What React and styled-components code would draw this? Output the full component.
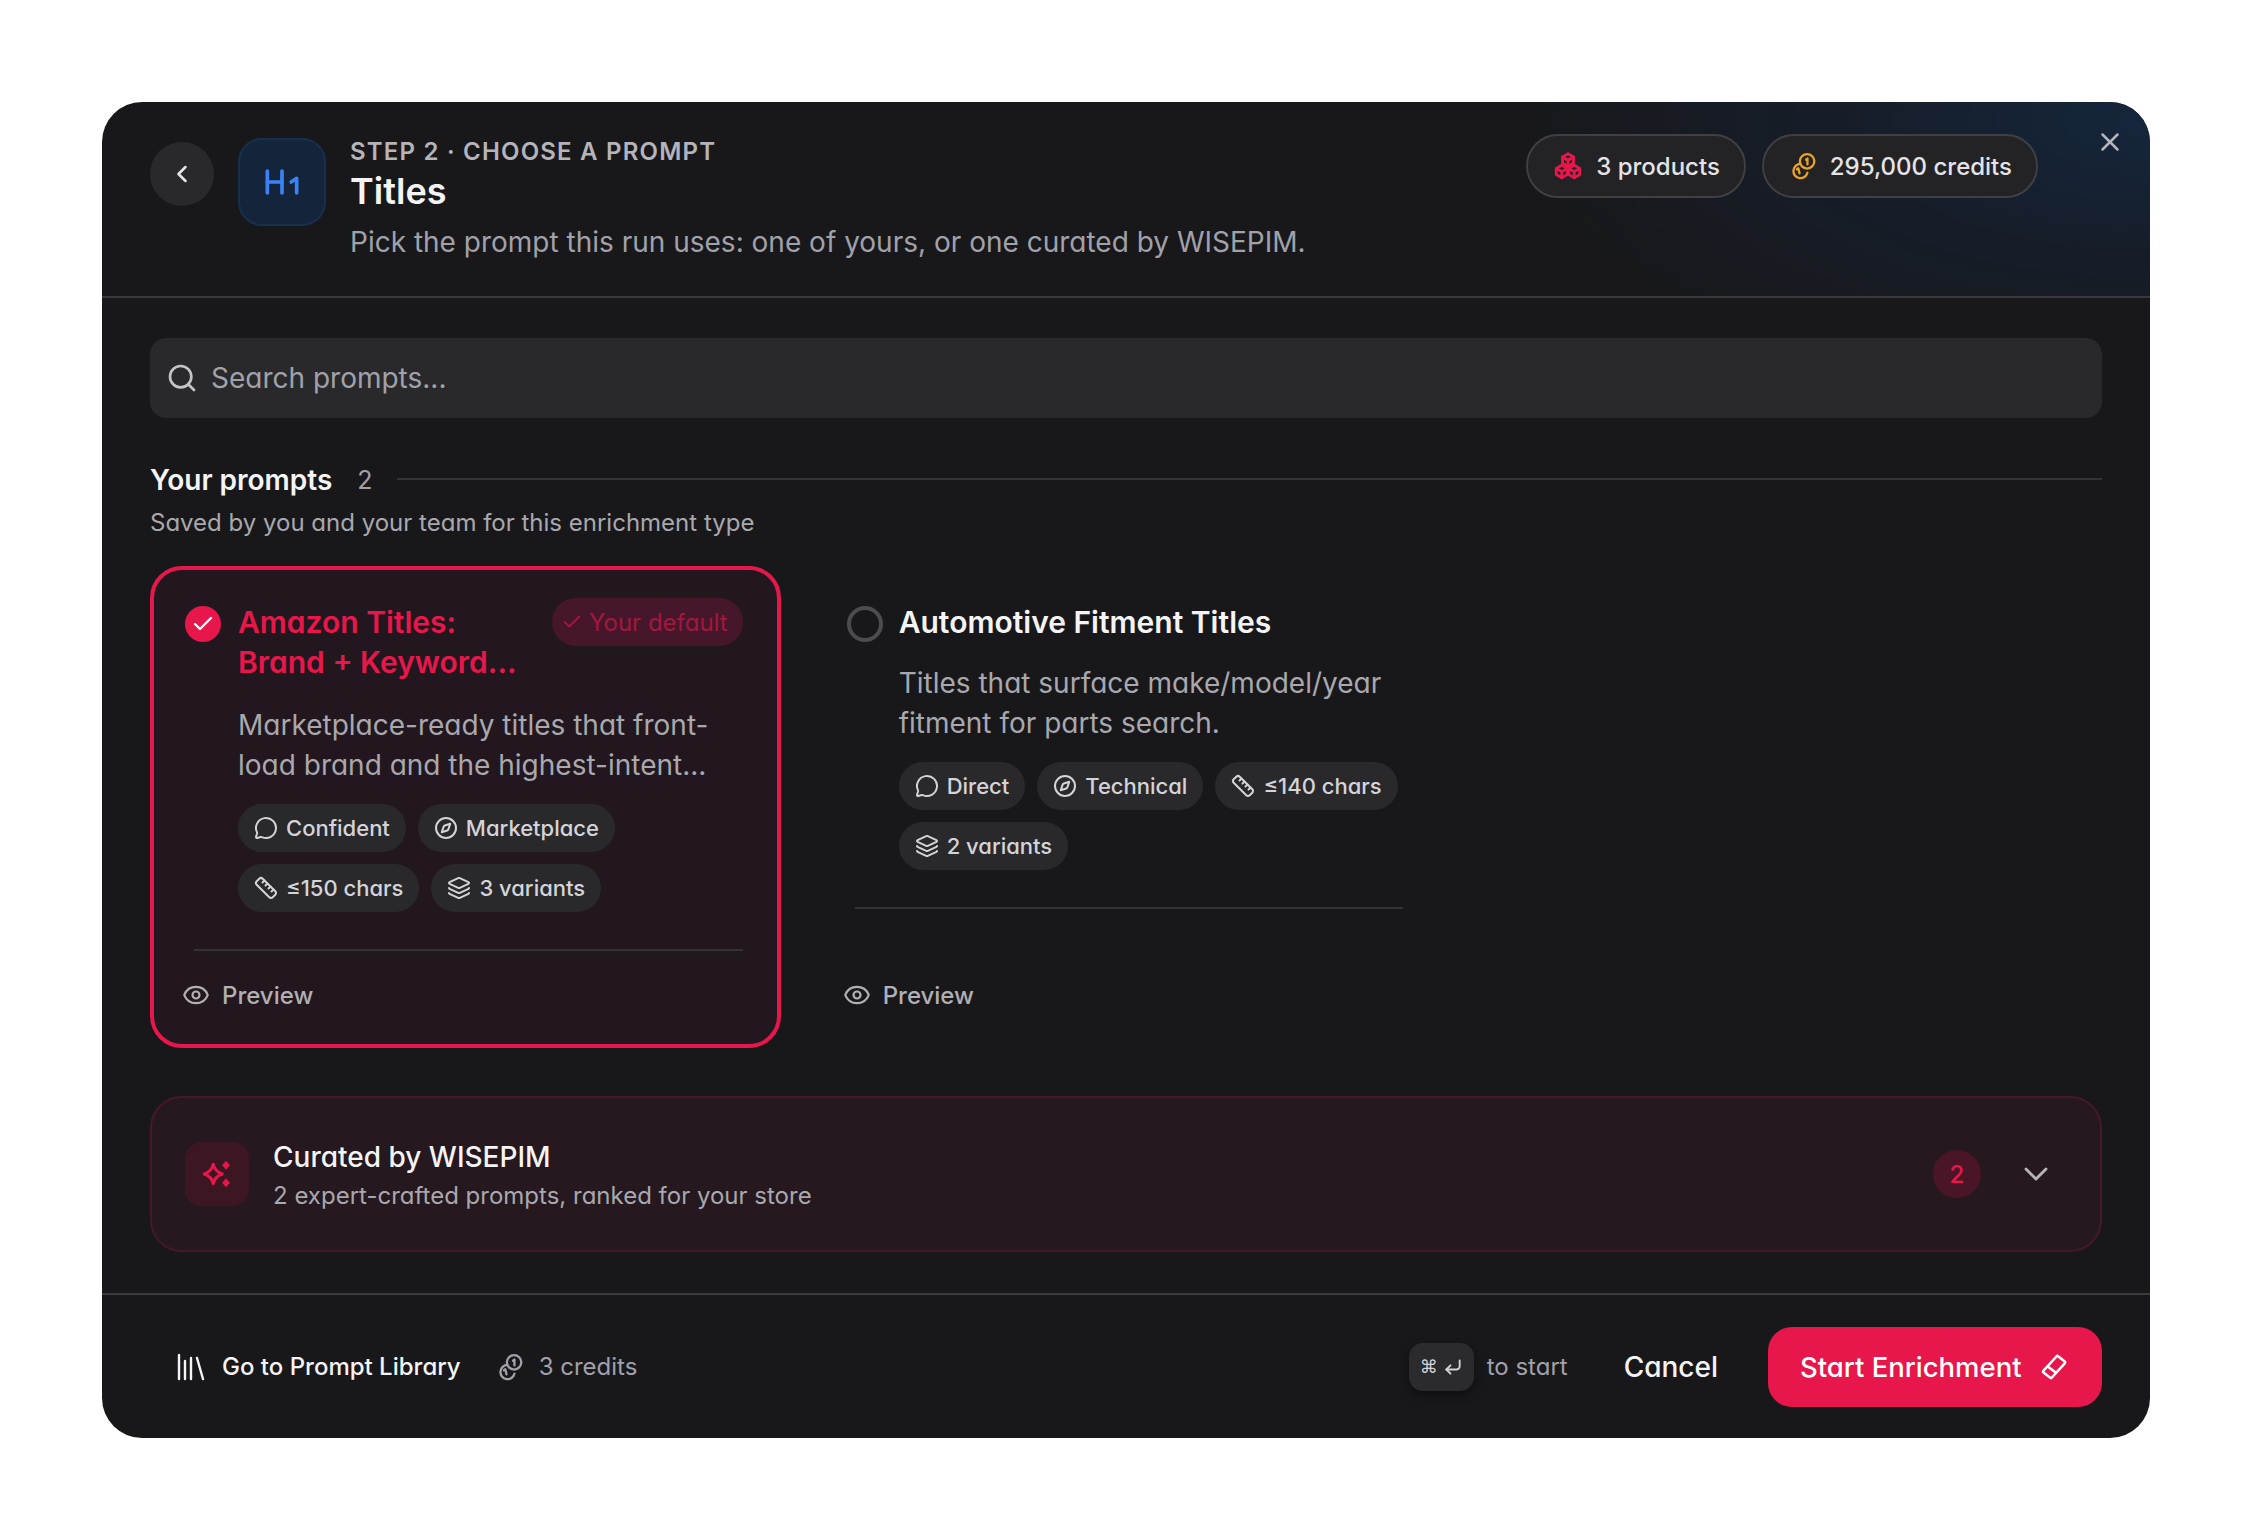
import React from "react";
import styled, { createGlobalStyle } from "styled-components";
import {
  ChevronLeft, ChevronDown, Search, X, Heading1, MessageCircle, Compass, Ruler, Layers, Eye, Check, Library, CornerDownLeft,
} from "lucide-react";

const Global = createGlobalStyle`
  * { box-sizing: border-box; }
  html, body { margin: 0; background: #fff; }
  body {
    font-family: Inter, "Liberation Sans", sans-serif;
    font-feature-settings: "cv11" 1;
    -webkit-font-smoothing: antialiased;
  }
  svg { flex: none; }
`;

const Page = styled.div`
  padding: 102px;
  width: 2252px;
  height: 1540px;
`;

const Modal = styled.div`
  width: 2048px;
  height: 1336px;
  border-radius: 40px;
  background: #18181b;
  overflow: hidden;
  display: flex;
  flex-direction: column;
`;

const Header = styled.header`
  position: relative;
  height: 196px;
  flex: none;
  display: flex;
  align-items: flex-start;
  padding: 32px 112px 0 48px;
  border-bottom: 2px solid #3a3a3e;
  background: radial-gradient(ellipse 640px 280px at 100% 10%, #15263c 0%, rgba(21, 32, 48, 0.7) 45%, rgba(24, 24, 27, 0) 100%);
`;

const BackButton = styled.button`
  width: 64px;
  height: 64px;
  margin-top: 8px;
  flex: none;
  border: 0;
  padding: 0;
  border-radius: 50%;
  background: #29292c;
  color: #e4e4e7;
  display: flex;
  align-items: center;
  justify-content: center;
`;

const HeadingTile = styled.div`
  width: 88px;
  height: 88px;
  margin: 4px 24px 0 24px;
  flex: none;
  border-radius: 24px;
  background: #14243a;
  border: 2px solid #18304f;
  color: #3b82f6;
  display: flex;
  align-items: center;
  justify-content: center;
`;

const HeaderText = styled.div`
  flex: 1;
  padding-top: 2px;
  display: flex;
  flex-direction: column;
`;

const Eyebrow = styled.div`
  font-size: 24px;
  line-height: 32px;
  font-weight: 600;
  letter-spacing: 1.2px;
  color: #b4b4ba;
  white-space: nowrap;
`;

const Title = styled.h1`
  margin: 1px 0 0;
  font-size: 36px;
  line-height: 44px;
  font-weight: 600;
  color: #f4f4f5;
`;

const Subtitle = styled.p`
  margin: 9px 0 0;
  font-size: 28px;
  line-height: 40px;
  color: #a1a1aa;
  white-space: nowrap;
`;

const HeaderChips = styled.div`
  display: flex;
  gap: 16px;
  flex: none;
`;

const CountChip = styled.div`
  height: 64px;
  padding: 0 24px 0 25px;
  display: flex;
  align-items: center;
  gap: 13px;
  border: 2px solid #3f3f44;
  border-radius: 32px;
  background: #232326;
  font-size: 24px;
  font-weight: 500;
  color: #e4e4e7;
  white-space: nowrap;
`;

const CloseButton = styled.button`
  position: absolute;
  top: 22px;
  right: 22px;
  width: 36px;
  height: 36px;
  border: 0;
  padding: 0;
  background: none;
  color: #b4b4ba;
  display: flex;
  align-items: center;
  justify-content: center;
`;

const Body = styled.main`
  flex: 1;
  padding: 40px 48px 0;
`;

const SearchBox = styled.div`
  height: 80px;
  padding: 0 16px;
  display: flex;
  align-items: center;
  gap: 13px;
  border-radius: 16px;
  background: #29292c;
  color: #a1a1aa;
  font-size: 28px;
`;

const SectionHead = styled.div`
  margin-top: 42px;
  height: 40px;
  display: flex;
  align-items: center;
`;

const SectionTitle = styled.h2`
  margin: 0;
  font-size: 28px;
  font-weight: 600;
  color: #f4f4f5;
`;

const SectionCount = styled.span`
  margin-left: 25px;
  font-size: 25px;
  color: #a1a1aa;
`;

const SectionRule = styled.div`
  flex: 1;
  height: 2px;
  margin: -2px 0 0 24px;
  background: #333337;
`;

const SectionNote = styled.p`
  margin: 5px 0 25px;
  font-size: 24px;
  line-height: 36px;
  color: #a8a8ae;
`;

const CardGrid = styled.div`
  display: grid;
  grid-template-columns: repeat(3, 1fr);
  column-gap: 30px;
  height: 482px;
`;

const Card = styled.article`
  display: flex;
  flex-direction: column;
  padding: 36px 34px 32px 31px;
  border: 4px solid ${(p) => (p.$selected ? "#e8174b" : "transparent")};
  border-radius: 32px;
  background: ${(p) => (p.$selected ? "#22171e" : "transparent")};
`;

const CardHead = styled.div`
  display: flex;
  align-items: flex-start;
  margin-bottom: ${(p) => (p.$selected ? "23px" : "21px")};
`;

const CheckDot = styled.span`
  width: 36px;
  height: 36px;
  flex: none;
  margin-right: 17px;
  border-radius: 50%;
  background: #e8174b;
  color: #fff;
  display: flex;
  align-items: center;
  justify-content: center;
`;

const RadioDot = styled.span`
  width: 36px;
  height: 36px;
  flex: none;
  margin: 0 16px 0 1px;
  border-radius: 50%;
  border: 4px solid #4b4b50;
`;

const CardTitle = styled.h3`
  margin: -4px 0 0;
  padding-right: ${(p) => (p.$selected ? "12px" : "0")};
  flex: 1;
  font-size: 30px;
  line-height: 40px;
  font-weight: 600;
  color: ${(p) => (p.$selected ? "#e8174b" : "#f4f4f5")};
`;

const DefaultBadge = styled.span`
  height: 48px;
  margin-top: -8px;
  padding: 0 15px 0 9px;
  flex: none;
  display: flex;
  align-items: center;
  gap: 6px;
  border-radius: 24px;
  background: #46172a;
  color: #a3173f;
  font-size: 24px;
  white-space: nowrap;
`;

const CardText = styled.p`
  margin: 0 0 19px 53px;
  font-size: 28px;
  line-height: 40px;
  color: #a8a8ae;
`;

const TagRow = styled.div`
  margin-left: 53px;
  display: flex;
  flex-wrap: wrap;
  gap: 12px;
`;

const Tag = styled.span`
  height: 48px;
  padding: 0 16px;
  display: flex;
  align-items: center;
  gap: 8px;
  border-radius: 24px;
  background: #29292c;
  color: #d4d4d8;
  font-size: 22px;
  font-weight: 500;
  white-space: nowrap;
`;

const CardRule = styled.div`
  margin: 37px 0 0 9px;
  height: 2px;
  background: #333237;
`;

const PreviewLink = styled.a`
  margin: auto 0 0 -3px;
  height: 34px;
  display: flex;
  align-items: center;
  gap: 12px;
  color: #b0b0b5;
  font-size: 24px;
  font-weight: 500;
`;

const CuratedPanel = styled.section`
  margin-top: 48px;
  height: 156px;
  padding: 0 44px 0 33px;
  display: flex;
  align-items: center;
  border: 2px solid #47182b;
  border-radius: 32px;
  background: #25181f;
`;

const SparkTile = styled.div`
  width: 64px;
  height: 64px;
  flex: none;
  border-radius: 16px;
  background: #3c1623;
  color: #e8174b;
  display: flex;
  align-items: center;
  justify-content: center;
`;

const CuratedText = styled.div`
  margin-left: 24px;
  flex: 1;
`;

const CuratedTitle = styled.div`
  font-size: 28px;
  line-height: 40px;
  margin-top: 2px;
  font-weight: 500;
  color: #f4f4f5;
`;

const CuratedNote = styled.div`
  font-size: 24px;
  line-height: 36px;
  margin-top: 1px;
  color: #a8a8ae;
`;

const CountDot = styled.span`
  width: 48px;
  height: 48px;
  margin-right: 35px;
  border-radius: 50%;
  background: #4b1528;
  color: #e8174b;
  font-size: 24px;
  font-weight: 500;
  display: flex;
  align-items: center;
  justify-content: center;
`;

const CaretIcon = styled.span`
  color: #b4b4ba;
  display: flex;
`;

const Footer = styled.footer`
  height: 145px;
  flex: none;
  padding: 0 48px 0 71px;
  display: flex;
  align-items: center;
  border-top: 2px solid #3a3a3e;
`;

const LibraryLink = styled.a`
  display: flex;
  align-items: center;
  gap: 13px;
  color: #f4f4f5;
  font-size: 24px;
  font-weight: 500;
  white-space: nowrap;
`;

const CreditNote = styled.span`
  margin-left: 35px;
  display: flex;
  align-items: center;
  gap: 15px;
  color: #a1a1aa;
  font-size: 24px;
`;

const Spacer = styled.div`
  flex: 1;
`;

const Kbd = styled.kbd`
  width: 65px;
  height: 48px;
  display: flex;
  align-items: center;
  justify-content: center;
  gap: 5px;
  border-radius: 14px;
  background: #2b2b2e;
  box-shadow: 0 4px 10px rgba(0, 0, 0, 0.4);
  color: #d4d4d8;
  font-family: "DejaVu Sans", sans-serif;
  font-size: 18px;
`;

const KbdHint = styled.span`
  margin-left: 13px;
  color: #a1a1aa;
  font-size: 24px;
`;

const CancelButton = styled.button`
  margin: 0 50px 0 56px;
  padding: 0;
  border: 0;
  background: none;
  color: #f4f4f5;
  font: inherit;
  font-size: 28px;
  font-weight: 500;
`;

const StartButton = styled.button`
  width: 334px;
  height: 80px;
  padding: 0 32px;
  border: 0;
  border-radius: 24px;
  background: #e8174b;
  color: #fff;
  font: inherit;
  font-size: 27.5px;
  font-weight: 500;
  display: flex;
  align-items: center;
  gap: 18px;
  white-space: nowrap;
`;

const BoxesIcon = () => (
  <svg width="30" height="30" viewBox="0 0 24 24" fill="none" stroke="#e8174b" strokeWidth="2.3" strokeLinejoin="round" strokeLinecap="round">
    <path d="M12 2.2l4.4 2.5v5L12 12.2 7.6 9.7v-5z" />
    <path d="M7.6 4.9L12 7.3l4.4-2.4M12 7.3v4.6" />
    <path d="M7 11.4l4.4 2.5v5L7 21.4l-4.4-2.5v-5z" />
    <path d="M2.8 14L7 16.5l4.2-2.5M7 16.5v4.6" />
    <path d="M17 11.4l4.4 2.5v5L17 21.4l-4.4-2.5v-5z" />
    <path d="M12.8 14l4.2 2.5 4.2-2.5M17 16.5v4.6" />
  </svg>
);

const CoinsIcon = ({ color, size = 28 }) => (
  <svg width={size} height={size} viewBox="0 0 24 24" fill="none" stroke={color} strokeWidth="2" strokeLinecap="round" strokeLinejoin="round">
    <circle cx="15.5" cy="8" r="6.2" />
    <path d="M14.6 6.6l1.2-1v5" />
    <path d="M9.8 10.2a6.1 6.1 0 1 0 6 7.6" />
    <path d="M6.8 14.8l1.2-.8 1 4.3" />
  </svg>
);

const SparkIcon = () => (
  <svg width="36" height="36" viewBox="0 0 24 24">
    <path d="M9.5 5.5c.8 3.6 2.4 5.3 6 6.5-3.6 1.2-5.2 2.9-6 6.5-.8-3.6-2.4-5.3-6-6.5 3.6-1.2 5.2-2.9 6-6.5z" fill="none" stroke="currentColor" strokeWidth="2" strokeLinejoin="round" />
    <path d="M18 3.2l2.6 3-2.6 3-2.6-3z" fill="currentColor" />
    <path d="M18 14.8l2.6 3-2.6 3-2.6-3z" fill="currentColor" />
  </svg>
);

const EraseIcon = () => (
  <svg width="28" height="28" viewBox="0 0 24 24" fill="none" stroke="#fff" strokeWidth="2.2" strokeLinejoin="round">
    <path d="M15.5 2.8l5.7 4.4a1 1 0 0 1 .2 1.4L10.2 21a1 1 0 0 1-1.4.2L3 16.8a1 1 0 0 1-.2-1.4L14.1 3a1 1 0 0 1 1.4-.2z" />
    <path d="M6.6 11.5l7.2 5.5" />
  </svg>
);

const ToneIcon = () => <MessageCircle size={24} strokeWidth={2} />;
const ChannelIcon = () => <Compass size={24} strokeWidth={2} />;
const LengthIcon = () => <Ruler size={24} strokeWidth={2} />;
const VariantIcon = () => <Layers size={24} strokeWidth={2} />;

const PromptTags = ({ tone, channel, length, variants }) => (
  <TagRow>
    <Tag><ToneIcon />{tone}</Tag>
    <Tag><ChannelIcon />{channel}</Tag>
    <Tag><LengthIcon />{length}</Tag>
    <Tag><VariantIcon />{variants}</Tag>
  </TagRow>
);

const Preview = () => (
  <PreviewLink>
    <Eye size={28} strokeWidth={1.9} />
    Preview
  </PreviewLink>
);

export default function App() {
  return (
    <Page>
      <Global />
      <Modal>
        <Header>
          <BackButton><ChevronLeft size={28} strokeWidth={2.2} /></BackButton>
          <HeadingTile><Heading1 size={44} strokeWidth={2} /></HeadingTile>
          <HeaderText>
            <Eyebrow>STEP 2 · CHOOSE A PROMPT</Eyebrow>
            <Title>Titles</Title>
            <Subtitle>Pick the prompt this run uses: one of yours, or one curated by WISEPIM.</Subtitle>
          </HeaderText>
          <HeaderChips>
            <CountChip><BoxesIcon />3 products</CountChip>
            <CountChip><CoinsIcon color="#eba324" />295,000 credits</CountChip>
          </HeaderChips>
          <CloseButton><X size={30} strokeWidth={2} /></CloseButton>
        </Header>

        <Body>
          <SearchBox>
            <Search size={32} strokeWidth={2} color="#c4c4c8" />
            Search prompts...
          </SearchBox>

          <SectionHead>
            <SectionTitle>Your prompts</SectionTitle>
            <SectionCount>2</SectionCount>
            <SectionRule />
          </SectionHead>
          <SectionNote>Saved by you and your team for this enrichment type</SectionNote>

          <CardGrid>
            <Card $selected>
              <CardHead $selected>
                <CheckDot><Check size={24} strokeWidth={2.4} /></CheckDot>
                <CardTitle $selected>Amazon Titles: Brand + Keyword...</CardTitle>
                <DefaultBadge><Check size={22} strokeWidth={2} />Your default</DefaultBadge>
              </CardHead>
              <CardText>Marketplace-ready titles that front-load brand and the highest-intent...</CardText>
              <PromptTags tone="Confident" channel="Marketplace" length="≤150 chars" variants="3 variants" />
              <CardRule />
              <Preview />
            </Card>

            <Card>
              <CardHead>
                <RadioDot />
                <CardTitle>Automotive Fitment Titles</CardTitle>
              </CardHead>
              <CardText>Titles that surface make/model/year fitment for parts search.</CardText>
              <PromptTags tone="Direct" channel="Technical" length="≤140 chars" variants="2 variants" />
              <CardRule />
              <Preview />
            </Card>
          </CardGrid>

          <CuratedPanel>
            <SparkTile><SparkIcon /></SparkTile>
            <CuratedText>
              <CuratedTitle>Curated by WISEPIM</CuratedTitle>
              <CuratedNote>2 expert-crafted prompts, ranked for your store</CuratedNote>
            </CuratedText>
            <CountDot>2</CountDot>
            <CaretIcon><ChevronDown size={40} strokeWidth={1.7} /></CaretIcon>
          </CuratedPanel>
        </Body>

        <Footer>
          <LibraryLink><Library size={36} strokeWidth={1.6} />Go to Prompt Library</LibraryLink>
          <CreditNote><CoinsIcon color="#a1a1aa" />3 credits</CreditNote>
          <Spacer />
          <Kbd>⌘<CornerDownLeft size={20} strokeWidth={2.2} /></Kbd>
          <KbdHint>to start</KbdHint>
          <CancelButton>Cancel</CancelButton>
          <StartButton>Start Enrichment<EraseIcon /></StartButton>
        </Footer>
      </Modal>
    </Page>
  );
}
